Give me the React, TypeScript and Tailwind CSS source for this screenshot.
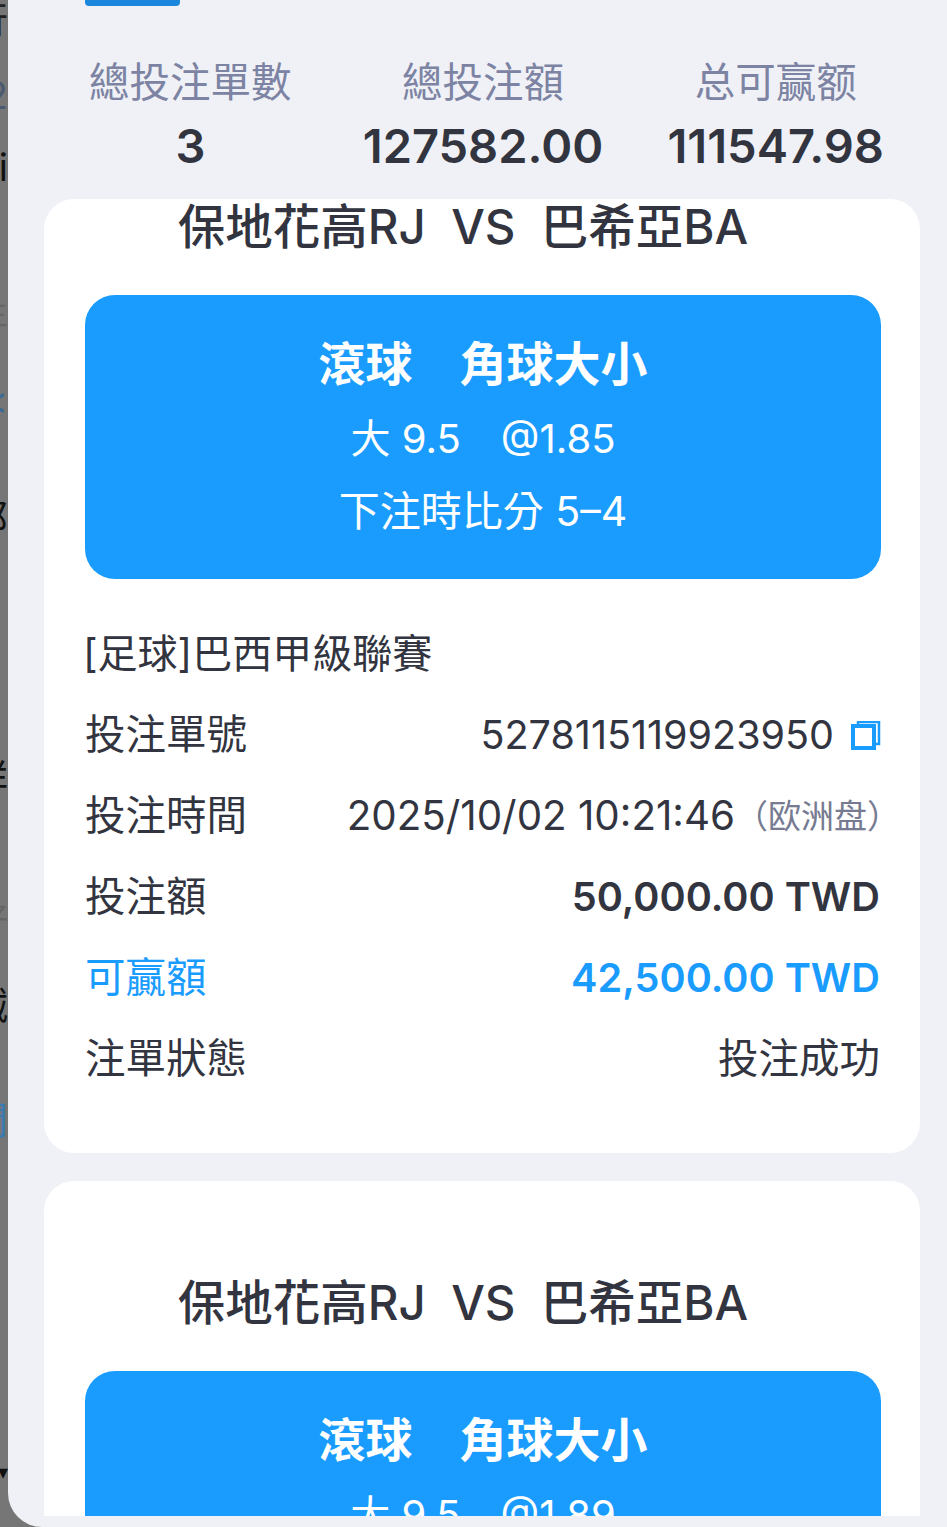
import React from "react";

const font = { fontFamily: 'Inter, "Noto Sans CJK TC", sans-serif' };

const stats = [
  { label: "總投注單數", value: "3" },
  { label: "總投注額", value: "127582.00" },
  { label: "总可赢额", value: "111547.98" },
];

const strip = [
  { text: "行", cls: "h-[75px] text-[38px] leading-[40px] text-[#222]" },
  { text: "2", cls: "h-[70px] text-[38px] leading-[40px] text-[#4a5a70]" },
  { text: "i", cls: "h-[148px] text-[38px] leading-[44px] text-[#111]" },
  { text: "生", cls: "h-[87px] text-[30px] leading-[40px] text-[#666]" },
  { text: "<", cls: "h-[116px] text-[38px] leading-[40px] text-[#3b6a96]" },
  { text: "郊", cls: "h-[260px] text-[38px] leading-[44px] text-[#111]" },
  { text: "詳", cls: "h-[144px] text-[38px] leading-[44px] text-[#111]" },
  { text: "好", cls: "h-[83px] text-[34px] leading-[40px] text-[#666]" },
  { text: "鉞", cls: "h-[115px] text-[38px] leading-[44px] text-[#111]" },
  { text: "間", cls: "h-[367px] text-[38px] leading-[44px] text-[#3b7bb0]" },
  { text: "▾", cls: "h-[40px] text-[20px] leading-[14px] text-[#111]" },
];

function CopyIcon() {
  return (
    <svg width="30" height="30" viewBox="0 0 30 30" fill="none" className="mr-[-1px] shrink-0">
      <path d="M7 3V1h21v22h-3" stroke="#1a9cff" strokeWidth="2.5" />
      <rect x="2" y="5" width="21" height="22" stroke="#1a9cff" strokeWidth="4" />
    </svg>
  );
}

function Row({ label, children, blue }: { label: string; children: React.ReactNode; blue?: boolean }) {
  return (
    <div className={`flex h-[81px] items-center justify-between pt-[2px] text-[40.5px] ${blue ? "text-[#1a9cff]" : "text-[#32353f]"}`}>
      <span>{label}</span>
      {children}
    </div>
  );
}

function BetCard({ odds }: { odds: string }) {
  return (
    <div className="rounded-[30px] bg-white pt-[93px] pr-[40px] pb-[54px] pl-[41px]">
      <div className="pr-[39px] text-center text-[47.5px] leading-[58px] font-medium whitespace-pre text-[#32353f]">
        保地花高RJ  VS  巴希亞BA
      </div>
      <div className="mt-[39px] mr-[-1px] flex h-[284px] flex-col items-center rounded-[30px] bg-[#1a9cff] pt-[40px] text-white">
        <div className="text-[47px] leading-[58px] font-bold whitespace-pre">滾球　角球大小</div>
        <div className="mt-[17px] text-[40px] leading-[58px] whitespace-pre">大 9.5　@{odds}</div>
        <div className="mt-[14px] text-[41px] leading-[58px] whitespace-pre">下注時比分 5–4</div>
      </div>
      <div className="mt-[34px] ml-[-2px] h-[81px] text-[40px] leading-[81px] text-[#32353f]">[足球]巴西甲級聯賽</div>
      <Row label="投注單號">
        <span className="flex items-center gap-[17px] text-[39.5px]">
          5278115119923950
          <CopyIcon />
        </span>
      </Row>
      <Row label="投注時間">
        <span className="flex items-center text-[40.3px]">
          2025/10/02 10:21:46
          <span className="mr-[-20px] text-[33px] text-[#767b92]">（欧洲盘）</span>
        </span>
      </Row>
      <Row label="投注額">
        <span className="text-[39.7px] font-semibold">50,000.00 TWD</span>
      </Row>
      <Row label="可贏額" blue>
        <span className="text-[39.7px] font-semibold">42,500.00 TWD</span>
      </Row>
      <Row label="注單狀態">
        <span>投注成功</span>
      </Row>
    </div>
  );
}

export default function App() {
  return (
    <div className="flex h-[1527px] w-[947px] overflow-hidden bg-[#767676]" style={font}>
      <div className="flex w-[8px] shrink-0 flex-col items-end overflow-hidden">
        {strip.map((s) => (
          <div key={s.text} className={`w-[8px] shrink-0 overflow-hidden ${s.cls}`}>
            <span className="ml-[-30px] block w-[38px] text-right">{s.text}</span>
          </div>
        ))}
      </div>
      <div className="flex h-[1527px] flex-1 flex-col rounded-bl-[34px] bg-[#f0f1f6]">
        <div className="ml-[77px] h-[6px] w-[95px] rounded-b-[4px] bg-[#1a87dc]" />
        <div className="mt-[48px] ml-[36px] grid w-[878px] grid-cols-3 text-center">
          {stats.map((s) => (
            <div key={s.label}>
              <div className="text-[40.5px] leading-[58px] text-[#7c83a3]">{s.label}</div>
              <div className="mt-[5px] text-[47px] leading-[58px] font-semibold text-[#32353f]">{s.value}</div>
            </div>
          ))}
        </div>
        <div className="mt-[24px] ml-[36px] h-[1317px] w-[876px] overflow-hidden rounded-t-[30px]">
          <div className="mt-[-94px] flex flex-col gap-[28px]">
            <BetCard odds="1.85" />
            <BetCard odds="1.89" />
          </div>
        </div>
      </div>
    </div>
  );
}
